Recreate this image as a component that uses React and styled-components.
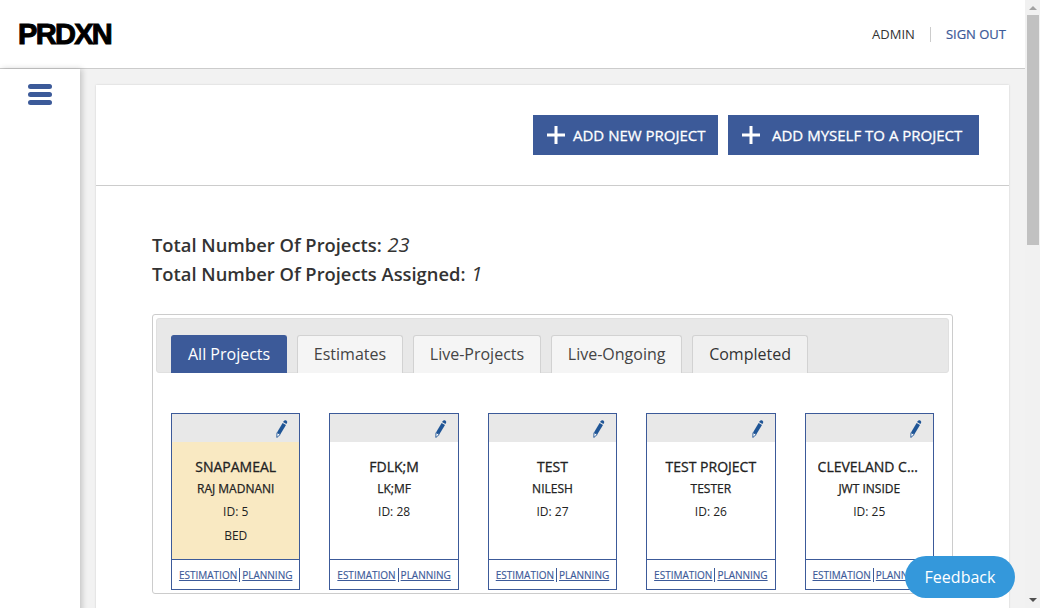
import React from "react"
import styled, { createGlobalStyle } from "styled-components"

const GlobalStyle = createGlobalStyle`
    body {
        margin: 0;
        padding-right: 15px;
        background: #f2f2f2;
        font-family: "Open Sans", "Liberation Sans", sans-serif;
        color: #333;
    }
`
const Header = styled.header`
    height: 68px;
    background: #fff;
    border-bottom: 1px solid #ccc;
    display: flex;
    align-items: center;
    justify-content: space-between;
    padding: 0 19px;
`
const Logo = styled.div`
    font-family: "Liberation Sans", Arial, sans-serif;
    font-weight: 700;
    font-size: 29px;
    line-height: 1;
    letter-spacing: -1.7px;
    color: #000;
    -webkit-text-stroke: 1px #000;
    margin-left: -1px;
`
const UserNav = styled.nav`
    display: flex;
    align-items: center;
    font-size: 13px;
`
const UserName = styled.span`
    color: #333;
    padding-right: 15px;
    border-right: 1px solid #ccc;
    line-height: 15px;
`
const SignOut = styled.a`
    color: #3c5a99;
    padding-left: 15px;
    line-height: 15px;
    -webkit-text-stroke: 0.2px #3c5a99;
`
const Layout = styled.div`
    display: flex;
    min-height: 1459px;
`
const Sidebar = styled.aside`
    width: 80px;
    flex-shrink: 0;
    background: #fff;
    box-shadow: 2px 0 6px rgba(0, 0, 0, 0.2);
    display: flex;
    justify-content: center;
    padding-top: 15px;
    box-sizing: border-box;
`
const MenuIcon = styled.svg`
    width: 24px;
    height: 21px;
    fill: #3c5a99;
`
const Main = styled.main`
    flex: 1;
    padding: 16px;
    min-width: 0;
`
const Panel = styled.section`
    background: #fff;
    box-shadow: 0 0 2px rgba(0, 0, 0, 0.15);
    height: 100%;
`
const Actions = styled.div`
    height: 101px;
    box-sizing: border-box;
    border-bottom: 1px solid #ccc;
    display: flex;
    justify-content: flex-end;
    align-items: center;
    gap: 10px;
    padding-right: 30px;
`
const ActionButton = styled.button`
    height: 40px;
    width: ${props => props.$width}px;
    border: 0;
    padding: 0 0 0 14px;
    background: #3c5a99;
    color: #fff;
    font-family: inherit;
    font-size: 15px;
    -webkit-text-stroke: 0.3px #fff;
    display: flex;
    align-items: center;
    gap: ${props => props.$gap}px;
`
const PlusIcon = styled.svg`
    width: 18px;
    height: 18px;
    fill: #fff;
`
const Content = styled.div`
    padding: 44px 56px 0;
`
const Stats = styled.div`
    font-size: 18.35px;
    font-weight: 600;
    line-height: 29px;
    color: #333;
    em { font-size: 20px; font-weight: 400; margin-left: 1px; }
`
const TabsCard = styled.div`
    margin-top: 26px;
    border: 1px solid #ccc;
    border-radius: 3px;
    padding: 3px;
`
const TabBar = styled.div`
    height: 55px;
    box-sizing: border-box;
    background: #e8e8e8;
    border: 1px solid #e0e0e0;
    border-radius: 3px;
    padding: 16px 0 0 14px;
    display: flex;
    gap: 9.7px;
`
const Tab = styled.div`
    height: 38px;
    box-sizing: border-box;
    padding: 0 16px;
    border: 1px solid ${props => (props.$active ? "#3c5a99" : "#d2d2d2")};
    border-bottom: 0;
    border-radius: 3px 3px 0 0;
    background: ${props => (props.$active ? "#3c5a99" : props.$muted ? "#f0f0f0" : "#f5f5f5")};
    color: ${props => (props.$active ? "#fff" : props.$muted ? "#333" : "#444")};
    font-size: 16px;
    line-height: 37px;
`
const CardGrid = styled.div`
    display: grid;
    grid-template-columns: repeat(5, 129.4px);
    justify-content: space-between;
    padding: 40px 15px 0 15px;
`
const Card = styled.article`
    height: 177px;
    box-sizing: border-box;
    border: 1px solid #3c5a99;
    background: #fff;
    display: flex;
    flex-direction: column;
    text-align: center;
`
const CardHead = styled.div`
    height: 28px;
    box-sizing: border-box;
    flex-shrink: 0;
    background: #e8e8e8;
    display: flex;
    justify-content: flex-end;
    align-items: center;
    padding: 1px 11px 0 0;
`
const PencilIcon = styled.svg`
    width: 13px;
    height: 18px;
`
const CardBody = styled.div`
    flex: 1;
    background: ${props => (props.$highlight ? "#f9e9c2" : "#fff")};
    padding: 16px 12px 0;
    color: #222;
`
const CardTitle = styled.div`
    font-size: 14px;
    line-height: 18px;
    -webkit-text-stroke: 0.3px #222;
    white-space: nowrap;
    overflow: hidden;
    text-overflow: ellipsis;
`
const CardClient = styled.div`
    font-size: 12px;
    line-height: 16px;
    -webkit-text-stroke: 0.25px #222;
    margin: 5px 0 -1px;
`
const CardLine = styled.div`
    font-size: 12px;
    line-height: 16px;
    margin-top: 8px;
`
const CardFoot = styled.div`
    height: 30px;
    box-sizing: border-box;
    flex-shrink: 0;
    border-top: 1px solid #3c5a99;
    display: flex;
    justify-content: center;
    align-items: center;
    font-size: 10px;
    color: #3c5a99;
`
const FootLink = styled.a`
    color: #3c5a99;
    text-decoration: underline;
    -webkit-text-stroke: 0.15px #3c5a99;
    & + & {
        border-left: 1px solid #3c5a99;
        margin-left: 2px;
        padding-left: 2px;
    }
`
const Feedback = styled.button`
    position: fixed;
    right: 25px;
    bottom: 10px;
    width: 110px;
    height: 42px;
    border: 0;
    border-radius: 21px;
    background: #3498db;
    color: #fff;
    font-family: inherit;
    font-size: 16px;
`
const ScrollTrack = styled.div`
    position: fixed;
    top: 0;
    right: 0;
    bottom: 0;
    width: 15px;
    background: #f1f1f1;
`
const ScrollThumb = styled.div`
    position: absolute;
    top: 15px;
    left: 2px;
    width: 12px;
    height: 230px;
    background: #c1c1c1;
`
const ScrollArrow = styled.div`
    position: absolute;
    left: 4px;
    width: 0;
    height: 0;
    border-left: 4px solid transparent;
    border-right: 4px solid transparent;
    ${props => (props.$down
        ? "bottom: 6px; border-top: 4px solid #505050;"
        : "top: 6px; border-bottom: 4px solid #a3a3a3;")}
`

const projects = [
    { title: "SNAPAMEAL", client: "RAJ MADNANI", id: 5, tag: "BED", highlight: true },
    { title: "FDLK;M", client: "LK;MF", id: 28 },
    { title: "TEST", client: "NILESH", id: 27 },
    { title: "TEST PROJECT", client: "TESTER", id: 26 },
    { title: "CLEVELAND CLINIC", client: "JWT INSIDE", id: 25 },
]

const tabs = ["All Projects", "Estimates", "Live-Projects", "Live-Ongoing", "Completed"]

const Plus = () => (
    <PlusIcon viewBox="0 0 18 18">
        <path d="M7.5 0h3v7.5H18v3h-7.5V18h-3v-7.5H0v-3h7.5z" />
    </PlusIcon>
)

const Pencil = () => (
    <PencilIcon viewBox="0 0 13 18">
        <path d="M8.6 1.2c.6-1 1.8-1.3 2.7-.8s1.2 1.7.7 2.6l-.6 1-3.4-1.9z" fill="#1f5596" />
        <path d="M7.6 3l3.4 1.9-5.6 9.4L2 12.4z" fill="#1f5596" />
        <path d="M2 12.6l3.2 1.9-3.4 3z" fill="#fff" stroke="#1f5596" strokeWidth=".9" />
    </PencilIcon>
)

const ProjectCard = ({ project }) => (
    <Card>
        <CardHead><Pencil /></CardHead>
        <CardBody $highlight={project.highlight}>
            <CardTitle>{project.title}</CardTitle>
            <CardClient>{project.client}</CardClient>
            <CardLine>ID: {project.id}</CardLine>
            {project.tag && <CardLine>{project.tag}</CardLine>}
        </CardBody>
        <CardFoot>
            <FootLink>ESTIMATION</FootLink>
            <FootLink>PLANNING</FootLink>
        </CardFoot>
    </Card>
)

const App = () => (
    <>
        <GlobalStyle />
        <Header>
            <Logo>PRDXN</Logo>
            <UserNav>
                <UserName>ADMIN</UserName>
                <SignOut>SIGN OUT</SignOut>
            </UserNav>
        </Header>
        <Layout>
            <Sidebar>
                <MenuIcon viewBox="0 0 24 21">
                    <rect y="0" width="24" height="5" rx="2.5" />
                    <rect y="8" width="24" height="5" rx="2.5" />
                    <rect y="16" width="24" height="5" rx="2.5" />
                </MenuIcon>
            </Sidebar>
            <Main>
                <Panel>
                    <Actions>
                        <ActionButton $width={185} $gap={8}><Plus />ADD NEW PROJECT</ActionButton>
                        <ActionButton $width={251} $gap={12}><Plus />ADD MYSELF TO A PROJECT</ActionButton>
                    </Actions>
                    <Content>
                        <Stats>Total Number Of Projects: <em>23</em></Stats>
                        <Stats>Total Number Of Projects Assigned: <em>1</em></Stats>
                        <TabsCard>
                            <TabBar>
                                {tabs.map((tab, i) => (
                                    <Tab key={tab} $active={i === 0} $muted={tab === "Completed"}>{tab}</Tab>
                                ))}
                            </TabBar>
                            <CardGrid>
                                {projects.map(p => <ProjectCard key={p.id} project={p} />)}
                            </CardGrid>
                        </TabsCard>
                    </Content>
                </Panel>
            </Main>
        </Layout>
        <Feedback>Feedback</Feedback>
        <ScrollTrack>
            <ScrollArrow />
            <ScrollThumb />
            <ScrollArrow $down />
        </ScrollTrack>
    </>
)

export default App
